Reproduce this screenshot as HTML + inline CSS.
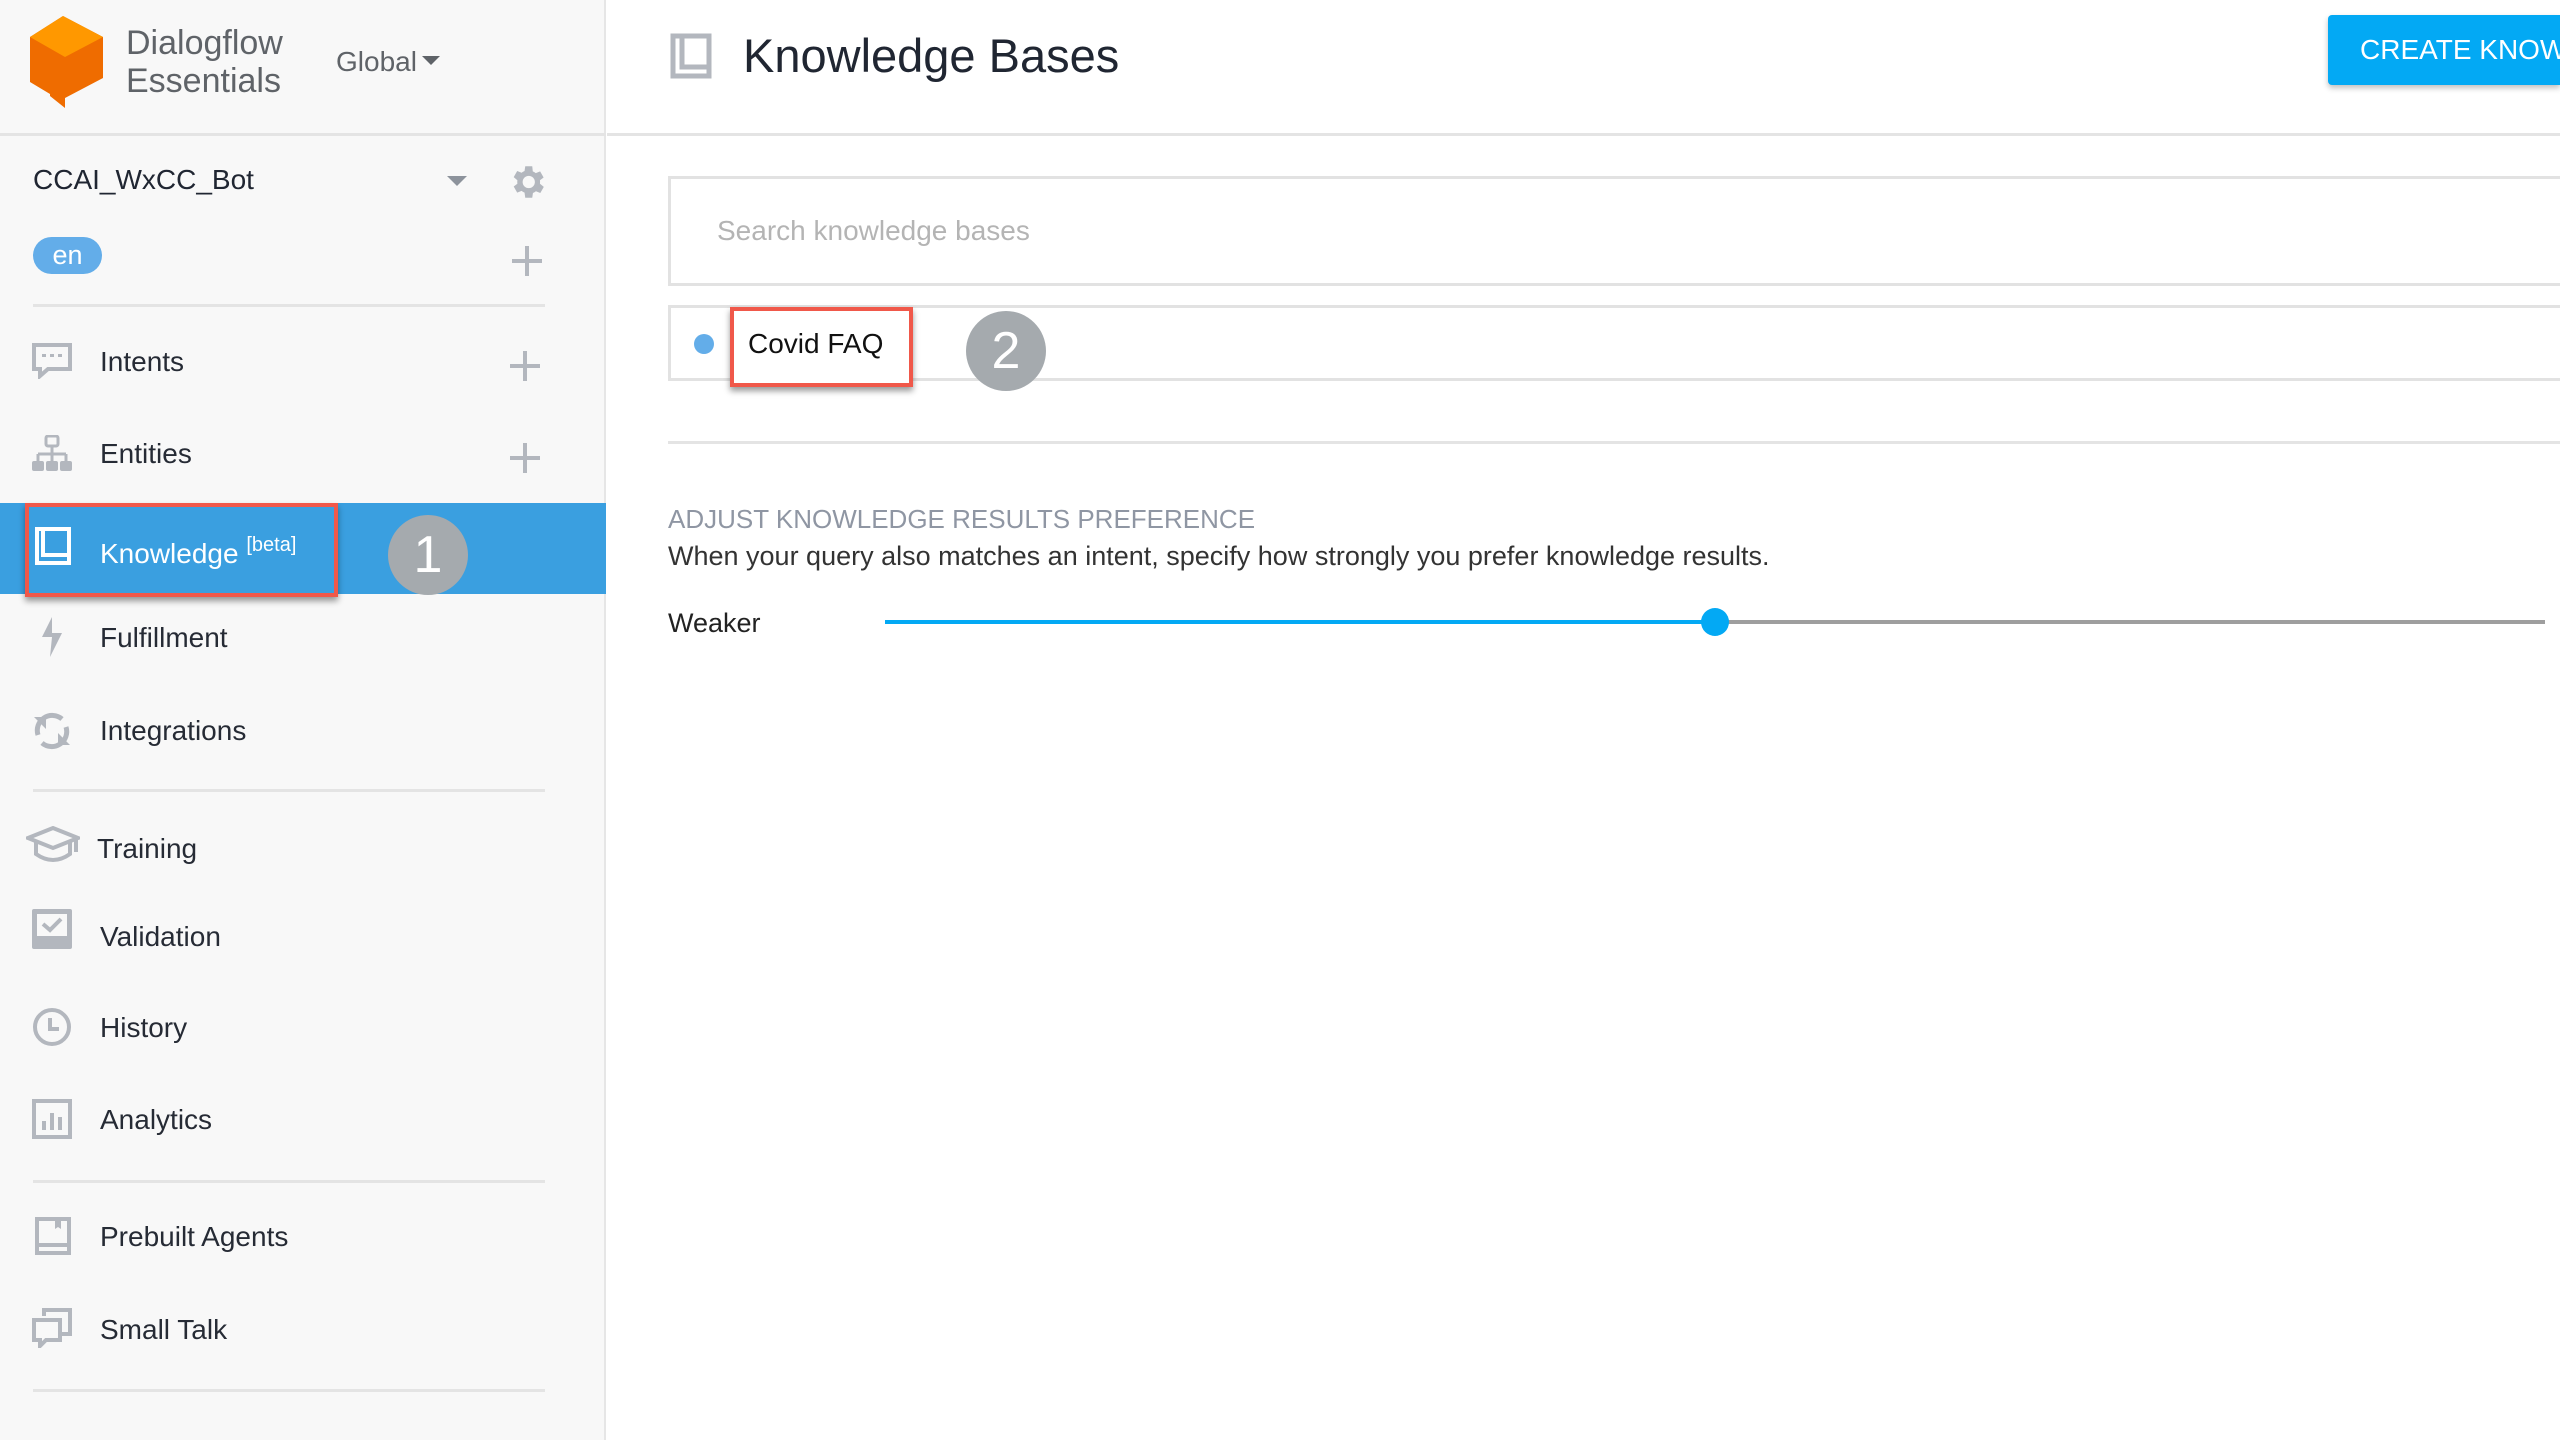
<!DOCTYPE html>
<html><head><meta charset="utf-8"><style>
*{margin:0;padding:0;box-sizing:border-box}
html,body{width:2560px;height:1440px;overflow:hidden}
body{background:#fff;font-family:"Liberation Sans",sans-serif;color:#202632;position:relative}
.clip{position:absolute;left:0;top:0;width:2560px;height:1440px;overflow:hidden}
.a{position:absolute;white-space:nowrap}
.side{position:absolute;left:0;top:0;width:606px;height:1440px;background:#f8f8f8;border-right:2px solid #e6e6e6}
.hl{position:absolute;height:3px;background:#e4e4e4}
.nav{position:absolute;left:100px;font-size:28px;line-height:40px;color:#262b35}
.ic{position:absolute;left:32px}
.plus{position:absolute;width:30px;height:30px}
.plus:before{content:"";position:absolute;left:0;top:13px;width:30px;height:4px;background:#b3b7be}
.plus:after{content:"";position:absolute;left:13px;top:0;width:4px;height:30px;background:#b3b7be}
</style></head><body><div class="clip">
<div class="side"></div>
<div class="hl" style="left:0;top:133px;width:606px"></div>
<svg class="a" style="left:28px;top:14px" width="80" height="96" viewBox="0 0 80 96">
<path d="M35 2 L75 23 L75 64 L37 84 L37 94 L22 82 L22 80 L2 68 L2 23 Z" fill="#ef6c00"/>
<path d="M35 2 L75 23 L37 43 L2 23 Z" fill="#ff9800"/>
</svg>
<div class="a" style="left:126px;top:23px;font-size:34px;line-height:40px;color:#5f6368">Dialogflow</div>
<div class="a" style="left:126px;top:61px;font-size:34px;line-height:40px;color:#5f6368">Essentials</div>
<div class="a" style="left:336px;top:44px;font-size:28px;line-height:36px;color:#5f6368">Global</div>
<svg class="a" style="left:422px;top:56px" width="18" height="10"><path d="M0 0 H18 L9 9Z" fill="#5f6368"/></svg>
<div class="a" style="left:33px;top:160px;font-size:28px;line-height:40px;color:#202632">CCAI_WxCC_Bot</div>
<svg class="a" style="left:447px;top:176px" width="20" height="11"><path d="M0 0 H20 L10 10Z" fill="#8d939c"/></svg>
<svg class="a" style="left:506px;top:161px" width="42" height="42" viewBox="0 0 24 24"><path fill="#b3b7be" d="M19.4 13a7.5 7.5 0 0 0 0-2l2.1-1.6-2-3.5-2.5 1a7 7 0 0 0-1.7-1L15 3h-4l-.4 2.7a7 7 0 0 0-1.7 1l-2.5-1-2 3.5L6.5 11a7.5 7.5 0 0 0 0 2l-2.1 1.6 2 3.5 2.5-1a7 7 0 0 0 1.7 1L11 21h4l.4-2.7a7 7 0 0 0 1.7-1l2.5 1 2-3.5zM13 15.5A3.5 3.5 0 1 1 13 8.5a3.5 3.5 0 0 1 0 7z"/></svg>
<div class="a" style="left:33px;top:237px;width:69px;height:37px;border-radius:19px;background:#63ade9;color:#fff;font-size:27px;line-height:37px;text-align:center">en</div>
<div class="plus" style="left:512px;top:246px"></div>
<div class="hl" style="left:33px;top:304px;width:512px"></div>
<svg class="ic" style="top:343px" width="40" height="36" viewBox="0 0 40 36"><path d="M2 2H38V26H16L8 33V26H2Z" fill="none" stroke="#b3b7be" stroke-width="4"/><rect x="10" y="11" width="4" height="3" fill="#b3b7be"/><rect x="18" y="11" width="4" height="3" fill="#b3b7be"/><rect x="26" y="11" width="4" height="3" fill="#b3b7be"/></svg>
<div class="nav" style="top:342px">Intents</div>
<div class="plus" style="left:510px;top:351px"></div>
<svg class="ic" style="top:435px" width="40" height="36" viewBox="0 0 40 36"><rect x="14" y="1" width="12" height="10" rx="2" fill="none" stroke="#b3b7be" stroke-width="3"/><path d="M20 11V19M6 19H34M6 19V26M20 19V26M34 19V26" stroke="#b3b7be" stroke-width="3" fill="none"/><rect x="0" y="26" width="12" height="10" rx="2" fill="#b3b7be"/><rect x="14" y="26" width="12" height="10" rx="2" fill="#b3b7be"/><rect x="28" y="26" width="12" height="10" rx="2" fill="#b3b7be"/></svg>
<div class="nav" style="top:434px">Entities</div>
<div class="plus" style="left:510px;top:443px"></div>
<div class="a" style="left:0;top:503px;width:606px;height:91px;background:#3a9fe0"></div>
<div class="a" style="left:25px;top:503px;width:313px;height:94px;border:4px solid #f0584a;box-shadow:0 4px 6px rgba(0,0,0,.4)"></div>
<svg class="ic" style="left:35px;top:527px" width="36" height="38" viewBox="0 0 36 38"><path d="M2 2H34V36H2Z M8 2V28H34" fill="none" stroke="#fff" stroke-width="4"/></svg>
<div class="nav" style="top:525px;color:#fff">Knowledge <sup style="font-size:20px;vertical-align:12px">[beta]</sup></div>
<div class="a" style="left:388px;top:515px;width:80px;height:80px;border-radius:50%;background:#a5aaae;color:#fff;font-size:52px;line-height:80px;text-align:center">1</div>
<svg class="ic" style="left:40px;top:617px" width="24" height="40" viewBox="0 0 24 40"><path d="M12 0L2 20H12L10 40L22 16H12Z" fill="#b3b7be"/></svg>
<div class="nav" style="top:618px">Fulfillment</div>
<svg class="ic" style="top:711px" width="40" height="40" viewBox="0 0 40 40"><path d="M6 24A15 15 0 0 1 30 8M34 16A15 15 0 0 1 10 32" fill="none" stroke="#b3b7be" stroke-width="5"/><path d="M2 6H14V18Z" fill="#b3b7be"/><path d="M38 34H26V22Z" fill="#b3b7be"/></svg>
<div class="nav" style="top:711px">Integrations</div>
<div class="hl" style="left:33px;top:789px;width:512px"></div>
<svg class="ic" style="left:26px;top:826px" width="54" height="38" viewBox="0 0 54 38"><path d="M2 12L27 2L52 12L27 22Z" fill="none" stroke="#b3b7be" stroke-width="4"/><path d="M10 16V28Q27 40 44 28V16" fill="none" stroke="#b3b7be" stroke-width="4"/><path d="M50 13V26" stroke="#b3b7be" stroke-width="4"/></svg>
<div class="nav" style="left:97px;top:829px">Training</div>
<svg class="ic" style="top:909px" width="40" height="40" viewBox="0 0 40 40"><rect x="0" y="0" width="40" height="40" rx="2" fill="#b3b7be"/><rect x="5" y="5" width="30" height="22" fill="#f8f8f8"/><path d="M11 15L18 21L29 10" fill="none" stroke="#b3b7be" stroke-width="4"/></svg>
<div class="nav" style="top:917px">Validation</div>
<svg class="ic" style="top:1007px" width="40" height="40" viewBox="0 0 40 40"><circle cx="20" cy="20" r="17" fill="none" stroke="#b3b7be" stroke-width="4"/><path d="M18 11V22H27" fill="none" stroke="#b3b7be" stroke-width="4"/></svg>
<div class="nav" style="top:1008px">History</div>
<svg class="ic" style="top:1099px" width="40" height="40" viewBox="0 0 40 40"><rect x="2" y="2" width="36" height="36" fill="none" stroke="#b3b7be" stroke-width="4"/><rect x="10" y="22" width="4" height="9" fill="#b3b7be"/><rect x="18" y="14" width="4" height="17" fill="#b3b7be"/><rect x="26" y="18" width="4" height="13" fill="#b3b7be"/></svg>
<div class="nav" style="top:1100px">Analytics</div>
<div class="hl" style="left:33px;top:1180px;width:512px"></div>
<svg class="ic" style="left:35px;top:1217px" width="36" height="38" viewBox="0 0 36 38"><path d="M2 2H34V36H2Z M2 28H34" fill="none" stroke="#b3b7be" stroke-width="4"/><path d="M20 2V12L23 10L26 12V2" fill="#b3b7be"/></svg>
<div class="nav" style="top:1217px">Prebuilt Agents</div>
<svg class="ic" style="top:1308px" width="40" height="40" viewBox="0 0 40 40"><path d="M12 8V2H38V26H30" fill="none" stroke="#b3b7be" stroke-width="4"/><path d="M2 12H28V32H14L8 38V32H2Z" fill="none" stroke="#b3b7be" stroke-width="4"/></svg>
<div class="nav" style="top:1310px">Small Talk</div>
<div class="hl" style="left:33px;top:1389px;width:512px"></div>
<div class="nav" style="top:1432px">Docs</div>

<div class="hl" style="left:607px;top:133px;width:1953px"></div>
<svg class="a" style="left:670px;top:33px" width="42" height="46" viewBox="0 0 42 46"><path d="M3 3H39V43H3Z M12 3V34H39" fill="none" stroke="#b3b7be" stroke-width="5"/></svg>
<div class="a" style="left:743px;top:28px;font-size:47px;line-height:56px;color:#202632">Knowledge Bases</div>
<div class="a" style="left:2328px;top:15px;width:232px;height:70px;background:#03a9f4;border-radius:4px 0 0 4px;box-shadow:0 3px 6px rgba(0,0,0,.25);color:#fff;font-size:28px;line-height:70px;padding-left:32px;overflow:hidden">CREATE KNOWLEDGE BASE</div>
<div class="a" style="left:668px;top:176px;width:1892px;height:110px;border:3px solid #e2e2e2;border-right:none"></div>
<div class="a" style="left:717px;top:213px;font-size:28px;line-height:36px;color:#b4b4b4">Search knowledge bases</div>
<div class="a" style="left:668px;top:305px;width:1892px;height:76px;border:3px solid #e2e2e2;border-right:none"></div>
<div class="a" style="left:694px;top:334px;width:20px;height:20px;border-radius:50%;background:#63ade9"></div>
<div class="a" style="left:730px;top:307px;width:183px;height:80px;border:4px solid #f0584a;box-shadow:0 4px 6px rgba(0,0,0,.4);background:#fff"></div>
<div class="a" style="left:748px;top:326px;font-size:28px;line-height:36px;color:#111">Covid FAQ</div>
<div class="a" style="left:966px;top:311px;width:80px;height:80px;border-radius:50%;background:#a5aaae;color:#fff;font-size:52px;line-height:80px;text-align:center">2</div>
<div class="hl" style="left:668px;top:441px;width:1892px"></div>
<div class="a" style="left:668px;top:503px;font-size:26px;line-height:32px;color:#8f96a3">ADJUST KNOWLEDGE RESULTS PREFERENCE</div>
<div class="a" style="left:668px;top:539px;font-size:27px;line-height:34px;color:#333">When your query also matches an intent, specify how strongly you prefer knowledge results.</div>
<div class="a" style="left:668px;top:606px;font-size:27px;line-height:34px;color:#222">Weaker</div>
<div class="a" style="left:885px;top:620px;width:830px;height:4px;background:#03a9f4"></div>
<div class="a" style="left:1715px;top:620px;width:830px;height:4px;background:#9e9e9e"></div>
<div class="a" style="left:1701px;top:608px;width:28px;height:28px;border-radius:50%;background:#03a9f4"></div>
</div></body></html>
